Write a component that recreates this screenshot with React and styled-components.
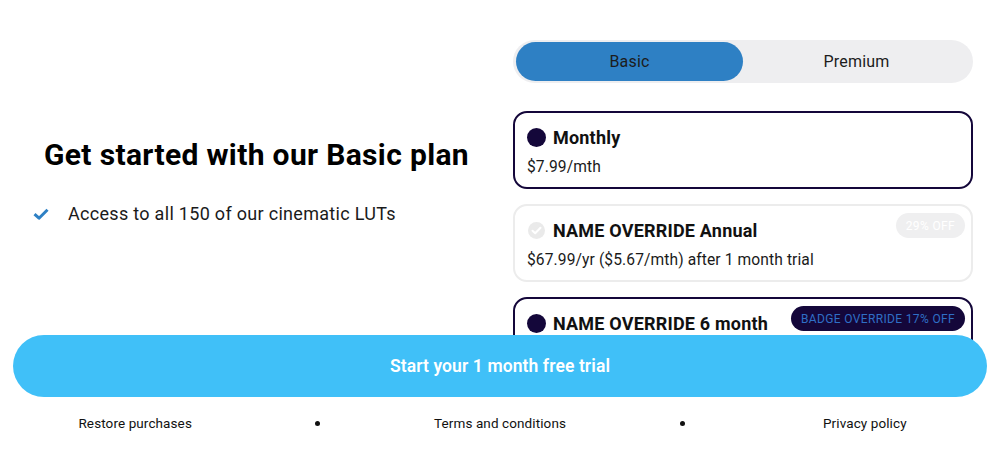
import React, { useState } from 'react';
import styled, { createGlobalStyle } from 'styled-components';

const GlobalStyle = createGlobalStyle`
  html, body {
    margin: 0;
    padding: 0;
    background: #ffffff;
    font-family: Roboto, "Liberation Sans", sans-serif;
    color: #111;
  }
`;

const Screen = styled.div`
  position: relative;
  width: 1000px;
  height: 450px;
  overflow: hidden;
  background: #fff;
`;

const Main = styled.div`
  display: flex;
  align-items: flex-start;
  padding-right: 27px;
`;

const Intro = styled.div`
  flex: 1;
  padding-top: 137px;
`;

const Heading = styled.h1`
  margin: 0;
  font-size: 30px;
  line-height: 36px;
  font-weight: 700;
  text-align: center;
  letter-spacing: 0.35px;
  color: #000;
`;

const Features = styled.ul`
  list-style: none;
  margin: 29px 0 0;
  padding: 0 0 0 33px;
`;

const Feature = styled.li`
  display: flex;
  align-items: center;
  gap: 19px;
  font-size: 18px;
  line-height: 24px;
  color: #1a1a1a;
  letter-spacing: 0.3px;
`;

const Plans = styled.div`
  width: 460px;
  padding-top: 40px;
  display: flex;
  flex-direction: column;
`;

const Toggle = styled.div`
  display: flex;
  height: 43px;
  padding: 2px 3px;
  box-sizing: border-box;
  background: #eeeef0;
  border-radius: 22px;
  margin-bottom: 28px;
`;

const ToggleOption = styled.button`
  flex: 1;
  border: none;
  border-radius: 20px;
  font-family: inherit;
  font-size: 16px;
  letter-spacing: 0.2px;
  color: #1c1c1c;
  background: ${(p) => (p.$active ? '#2e80c4' : 'transparent')};
  cursor: pointer;
`;

const Cards = styled.div`
  display: flex;
  flex-direction: column;
  gap: 15px;
`;

const Card = styled.div`
  position: relative;
  height: 78px;
  box-sizing: border-box;
  border-radius: 14px;
  border: ${(p) => (p.$selected ? '2px solid #14073a' : '2px solid #ececec')};
  padding: 12px 12px 0;
  display: flex;
  flex-direction: column;
  gap: 8px;
  background: #fff;
`;

const TitleRow = styled.div`
  display: flex;
  align-items: center;
  gap: 7px;
  height: 24px;
`;

const Dot = styled.span`
  width: 19px;
  height: 19px;
  border-radius: 50%;
  background: #14073a;
  flex-shrink: 0;
`;

const Title = styled.span`
  font-size: 18px;
  font-weight: 700;
  color: #111;
  letter-spacing: 0.2px;
`;

const Price = styled.div`
  font-size: 15.6px;
  line-height: 20px;
  color: #1a1a1a;
  letter-spacing: 0.1px;
`;

const Badge = styled.span`
  position: absolute;
  top: 7px;
  right: 6px;
  height: 25px;
  padding: 0 10px;
  border-radius: 13px;
  display: flex;
  align-items: center;
  font-size: 12px;
  letter-spacing: 0.35px;
  background: ${(p) => (p.$dark ? '#14073a' : '#efeff0')};
  color: ${(p) => (p.$dark ? '#2f6fc6' : '#ffffff')};
`;

const Bottom = styled.div`
  position: absolute;
  left: 0;
  right: 0;
  bottom: 0;
  display: flex;
  flex-direction: column;
`;

const CTA = styled.button`
  margin: 0 13px;
  height: 62px;
  border: none;
  border-radius: 31px;
  background: #40c0f8;
  color: #fff;
  font-family: inherit;
  font-size: 17.5px;
  font-weight: 600;
  letter-spacing: 0.1px;
  cursor: pointer;
`;

const Links = styled.div`
  height: 52px;
  padding-bottom: 1px;
  display: flex;
  align-items: center;
  padding-left: 44px;
  padding-right: 44px;
  background: #fff;
`;

const LinkItem = styled.span`
  flex: 1;
  display: flex;
  justify-content: center;
  font-size: 13.5px;
  color: #111;
  letter-spacing: 0.1px;
`;

const Bullet = styled.span`
  width: 5px;
  height: 5px;
  border-radius: 50%;
  background: #111;
`;

const CheckIcon = () => (
  <svg width="16" height="12" viewBox="0 0 16 12">
    <path d="M1.5 6.2 L6 10.2 L14.5 1.8" fill="none" stroke="#2e80c4" strokeWidth="3" strokeLinejoin="round" />
  </svg>
);

const MutedCheck = () => (
  <svg width="19" height="19" viewBox="0 0 19 19">
    <circle cx="9.5" cy="9.5" r="8.5" fill="#eaeaea" />
    <path d="M5.5 9.8 L8.2 12.3 L13.5 6.8" fill="none" stroke="#fff" strokeWidth="2" strokeLinecap="round" strokeLinejoin="round" />
  </svg>
);

// the third card's price line sits behind the CTA, so it's left out
const plans = [
  { id: 'monthly', name: 'Monthly', price: '$7.99/mth', selected: true },
  { id: 'annual', name: 'NAME OVERRIDE Annual', price: '$67.99/yr ($5.67/mth) after 1 month trial', badge: '29% OFF' },
  { id: 'six', name: 'NAME OVERRIDE 6 month', badge: 'BADGE OVERRIDE 17% OFF', dark: true, selected: true },
];

export default function App() {
  const [tier, setTier] = useState('basic');

  return (
    <Screen>
      <GlobalStyle />
      <Main>
        <Intro>
          <Heading>Get started with our Basic plan</Heading>
          <Features>
            <Feature>
              <CheckIcon />
              Access to all 150 of our cinematic LUTs
            </Feature>
          </Features>
        </Intro>

        <Plans>
          <Toggle>
            <ToggleOption $active={tier === 'basic'} onClick={() => setTier('basic')}>Basic</ToggleOption>
            <ToggleOption $active={tier === 'premium'} onClick={() => setTier('premium')}>Premium</ToggleOption>
          </Toggle>
          <Cards>
            {plans.map((p) => (
              <Card key={p.id} $selected={p.selected}>
                <TitleRow>
                  {p.selected ? <Dot /> : <MutedCheck />}
                  <Title>{p.name}</Title>
                </TitleRow>
                {p.price && <Price>{p.price}</Price>}
                {p.badge && <Badge $dark={p.dark}>{p.badge}</Badge>}
              </Card>
            ))}
          </Cards>
        </Plans>
      </Main>

      <Bottom>
        <CTA>Start your 1 month free trial</CTA>
        <Links>
          <LinkItem>Restore purchases</LinkItem>
          <LinkItem><Bullet /></LinkItem>
          <LinkItem>Terms and conditions</LinkItem>
          <LinkItem><Bullet /></LinkItem>
          <LinkItem>Privacy policy</LinkItem>
        </Links>
      </Bottom>
    </Screen>
  );
}
